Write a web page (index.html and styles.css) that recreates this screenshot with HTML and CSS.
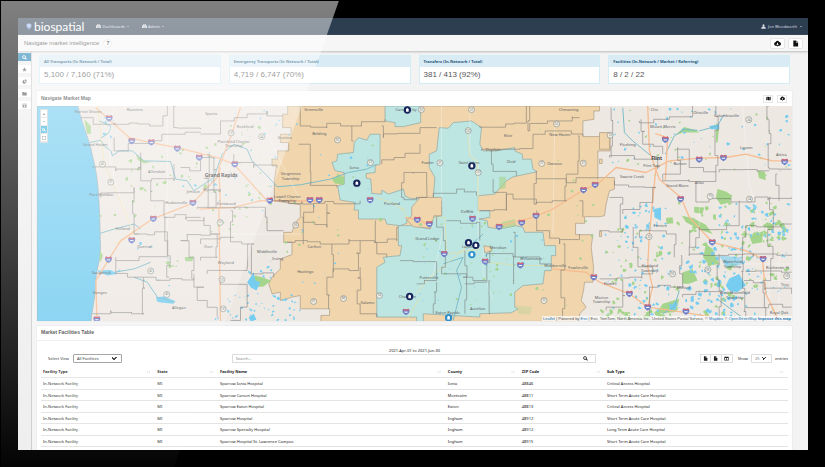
FILE: index.html
```html
<!DOCTYPE html>
<html lang="en">
<head>
<meta charset="utf-8">
<title>Navigate market intelligence</title>
<link rel="stylesheet" href="styles.css">
</head>
<body>
<svg class="defs" aria-hidden="true">
  <symbol id="i-cloud" viewBox="0 0 16 16"><path d="M4 13a4 4 0 0 1-.6-7.900A4.600 4.600 0 0 1 12 4.500 4.300 4.300 0 0 1 12.500 13H10l-2 2-2-2zM7 6v3H5l3 3 3-3H9V6z" fill-rule="evenodd"/></symbol>
  <symbol id="i-file" viewBox="0 0 16 16"><path d="M3 1h6v5h5v9H3zM10 1l4 4h-4z"/></symbol>
  <symbol id="i-map" viewBox="0 0 16 16"><path d="M1 3l4-1v11l-4 1zM6 2l4 1v11l-4-1zM11 3l4-1v11l-4 1z"/></symbol>
  <symbol id="i-search" viewBox="0 0 16 16"><path d="M6.500 1a5.500 5.500 0 1 0 3 10l4 4 2-2-4-4A5.500 5.500 0 0 0 6.500 1zm0 2.500a3 3 0 1 1 0 6 3 3 0 0 1 0-6z" fill-rule="evenodd"/></symbol>
  <symbol id="i-dash" viewBox="0 0 16 16"><path d="M1 13a8 8 0 1 1 14 0zM7 4v2h2V4zM3 8v2h2V8zm8 0v2h2V8zM7 12h2l1-5z" fill-rule="evenodd"/></symbol>
  <symbol id="i-star" viewBox="0 0 16 16"><path d="M8 1l2 5 5 .4-4 3.400 1.300 5.200L8 12l-4.300 3L5 9.800 1 6.400 6 6z"/></symbol>
  <symbol id="i-pie" viewBox="0 0 16 16"><path d="M7 3v6l5 4A6 6 0 1 1 7 3zM9 1a6 6 0 0 1 6 6H9zM10 8.500h5a6 6 0 0 1-2 4z"/></symbol>
  <symbol id="i-folder" viewBox="0 0 16 16"><path d="M1 3h5l2 2h7v9H1z"/></symbol>
  <symbol id="i-save" viewBox="0 0 16 16"><path d="M2 2h12v12H2zM4 4v3h8V4zM6 9v4h4V9z" fill-rule="evenodd"/></symbol>
  <symbol id="i-user" viewBox="0 0 16 16"><path d="M8 1a3.500 4 0 0 1 2 7l5 3v4H1v-4l5-3a3.500 4 0 0 1 2-7z"/></symbol>
  <symbol id="i-table" viewBox="0 0 16 16"><path d="M1 2h14v12H1zM3 6v6h4V6zm6 0v6h4V6z" fill-rule="evenodd"/></symbol>
</svg>

<div class="screen">
  <header class="navbar">
    <a class="brand" href="#"><svg class="brand-mark" viewBox="0 0 16 18"><path d="M8 0a7 7 0 0 1 7 7c0 5-5 7-7 11C6 14 1 12 1 7a7 7 0 0 1 7-7z" fill="#6f93dd"/><path d="M3 5l4-2 2 3 4-1M4 9l4-2 4 3M8 3v8" stroke="#dce8fb" stroke-width="1.500" fill="none"/></svg>biospatial</a>
    <nav class="nav-links">
      <a href="#"><svg><use href="#i-dash"/></svg>Dashboards<i class="caret"></i></a>
      <a href="#"><svg><use href="#i-dash"/></svg>Admin<i class="caret"></i></a>
    </nav>
    <a class="user" href="#"><svg><use href="#i-user"/></svg>Jon Woodworth<i class="caret"></i></a>
  </header>

  <div class="titlebar">
    <h1>Navigate market intelligence</h1>
    <button class="help" type="button">?</button>
    <div class="title-actions">
      <button type="button" aria-label="Download"><svg><use href="#i-cloud"/></svg></button>
      <button type="button" aria-label="Document"><svg><use href="#i-file"/></svg></button>
    </div>
  </div>

  <div class="workspace">
    <aside class="rail">
      <button class="active" type="button" aria-label="Search"><svg><use href="#i-search"/></svg></button>
      <button type="button" aria-label="Favorites"><svg><use href="#i-star"/></svg></button>
      <button type="button" aria-label="Charts"><svg><use href="#i-pie"/></svg></button>
      <button type="button" aria-label="Folders"><svg><use href="#i-folder"/></svg></button>
      <button type="button" aria-label="Save"><svg><use href="#i-save"/></svg></button>
    </aside>

    <main class="content">
      <section class="stats">
        <article class="stat"><h2>All Transports (In Network / Total)</h2><p>5,100 / 7,160 (71%)</p></article>
        <article class="stat"><h2>Emergency Transports (In Network / Total)</h2><p>4,719 / 6,747 (70%)</p></article>
        <article class="stat"><h2>Transfers (In-Network / Total)</h2><p>381 / 413 (92%)</p></article>
        <article class="stat"><h2>Facilities (In-Network / Market / Referring)</h2><p>8 / 2 / 22</p></article>
      </section>

      <section class="panel map-panel">
        <div class="panel-head">
          <h2>Navigate Market Map</h2>
          <div class="map-actions">
            <button type="button" aria-label="Map layers"><svg><use href="#i-map"/></svg></button>
            <button type="button" aria-label="Download map"><svg><use href="#i-cloud"/></svg></button>
          </div>
        </div>
        <div class="map">
          <svg class="map-canvas" viewBox="108 15 2271 648">
            <rect x="108" y="15" width="2271" height="648" fill="#eee8e3"/>
            <path d="M108 15H231C246 80 265 110 276 170C296 240 296 330 299 440C299 485 287 500 285 540C284 590 275 620 270 663H108Z" fill="#76cdf0" stroke="#9aa9ad" stroke-width="2"/>

            <path class="orange" d="M862 15V40H847V80H872V100H840V125H865V150H832V175H815V195H828L822 240V300L900 312V350L885 365L875 395H850V425H875V462L840 475V505L815 530L805 550L815 580L840 575V600L875 590L900 585V625H988V645H962V663H1740V640L1760 620L1745 600L1752 570L1755 545H1780L1782 500L1775 440L1780 402H1728V368H1755V348H1800L1815 345L1820 310L1830 270L1845 265V230H1795V150H1832V97H1805V107H1750V60L1783 55V30H1800V15Z"/>
            <path class="orange" d="M1800 95H1830V145H1800ZM1800 175H1808V188H1800ZM1800 392H1806V408H1800Z"/>
            <g class="teal">
              <path d="M1155 15H1262V65L1210 77H1185V65L1155 60Z"/>
              <path d="M995 185L1010 180L1012 160L1060 155L1062 125L1075 110L1100 118L1110 100H1140V190L1125 195V215L1098 218V232L1112 235L1115 278L1145 280V268L1165 280L1210 265L1215 285L1230 293H1260V320L1245 330V350L1220 352V368L1200 375L1160 370L1155 355H1075V328H1062L1065 305L1020 298L1012 255L1032 250V215L1005 210Z"/>
              <path d="M1318 80L1345 82L1360 65L1415 60L1445 80L1440 130L1450 150H1490L1545 140V150L1568 160V175H1595L1600 205L1612 213L1540 228L1520 240L1500 262L1485 280L1435 285V330H1470V350L1437 355L1462 360L1465 380L1500 385L1550 375L1570 380L1575 395H1630L1635 435H1668V465H1655V510H1635L1630 550L1570 555L1545 575V620L1555 625L1535 637L1440 640V650L1270 640V663H1250V650H1130V500L1155 485L1150 470L1200 465L1205 435H1195V375H1240L1290 385L1300 350L1325 345V320H1300V290L1305 230L1288 200V160L1310 150Z"/>
            </g>
            <path class="orange" d="M1235 320L1260 290H1325V345H1302L1292 383L1240 378L1222 360L1235 345ZM1452 435L1475 440V452L1455 456Z"/>

            <g class="park">
              <path d="M745 540L765 525L785 530L812 540L790 558L760 560Z"/><path d="M995 235L1012 225L1032 228V252L1005 248Z"/>
              <path d="M1498 228H1518V262L1498 266Z" opacity=".6"/><path d="M1507 365L1545 355L1548 375L1507 382Z" opacity=".6"/>
              <path d="M1550 615L1598 620L1590 643L1555 640Z" opacity=".3"/>
              <path d="M250 55L270 75V100L258 98Z"/><path d="M405 160L430 180L455 182L430 188L412 178Z"/><path d="M552 470L580 468L575 482H555Z"/><path d="M298 450L306 465L300 485L296 475Z"/>
              <path d="M2150 65L2160 80L2155 125H2150Z"/><path d="M2025 105L2055 78L2090 88L2100 95L2050 95Z"/><path d="M2155 265L2180 272L2200 285L2190 305L2165 312L2150 290Z"/>
              <path d="M2275 210L2298 213L2300 238L2280 232Z"/><path d="M2048 345L2080 352L2120 372L2140 400L2105 388L2060 365Z"/><path d="M2120 430L2140 445L2160 490L2130 495L2112 470Z"/>
              <path d="M2050 515L2080 505L2095 540L2070 550H2050Z"/><path d="M1990 610L2040 595L2030 635L1970 640Z"/><path d="M2085 318L2115 320L2110 340L2085 335Z"/><path d="M2250 405L2290 400V425L2260 430Z"/><path d="M2000 352L2020 350L2022 368L2002 370Z"/>
            </g>
            <g id="parks" class="park"></g>
            <g class="water">
              <path d="M740 545L760 515L765 540L780 545L768 570L752 562Z"/><path d="M465 590L490 588L525 602L518 610L480 606L470 604Z"/><path d="M745 650L760 640L768 658L750 662Z"/>
              <path d="M2190 535L2220 520L2240 555L2215 575L2190 570L2180 555Z"/><path d="M2160 465L2220 470L2235 490L2180 500Z" opacity=".6"/><path d="M1965 325L1985 320V360L1965 350Z"/>
              <path d="M2010 620L2030 600L2035 615L2015 632Z"/><path d="M2130 75L2160 70V85L2135 85Z"/><path d="M285 510L330 508L350 520L320 525Z"/>
            </g>
            <g id="lakes" class="water"></g>
            <g class="river">
              <path d="M266 125L300 118L310 135L330 150L335 165L355 150H395L430 180L510 182L525 235L560 240L580 270L640 230L665 160L700 130L740 145L755 180L800 225L830 258L900 252L990 235L1045 215L1100 205L1130 190"/>
              <path d="M298 398L340 385L400 370L420 385"/><path d="M295 60L330 75L325 95L300 112"/>
              <path d="M400 530L440 545L470 590L520 605M340 515L400 505L450 485"/>
              <path d="M2235 655L2160 600M1998 160L2025 105L2055 85L2095 88M1870 20L1875 95L1900 120L1955 165M2100 90L2155 75L2175 40"/>
              <path d="M1360 660L1385 560L1370 510L1390 470L1330 490M1400 445L1450 400"/><path d="M1990 640L2025 620L2040 570" />
            </g>
            <g class="minor">
              <path d="M340 15C300 150 350 280 400 400M500 15V400M760 20L900 300M1410 15V160L1435 185V420M1325 15V300M1665 80L1660 400M2230 15L2250 250L2300 420M1990 20V240M2100 250V400M620 400H900M1330 390L1300 520L1260 560M1480 600L1450 520V440M1960 540V660M2240 490H2378M2240 515H2378M2240 540H2378M2310 470V660M2340 470V660"/>
            </g>
            <g class="yellow">
              <path d="M290 15L310 190L375 340L400 400L340 430M1200 320L1230 360L1335 350L1340 460M1130 292L1160 300L1220 330M1340 460L1440 445M1402 90L1410 165L1432 180L1437 340M1250 580L1280 540L1400 440M1220 660L1260 590M1460 485L1560 495L1650 495"/>
            </g>
            <g class="highway">
              <path d="M285 20L330 60L385 110L450 125L530 140L650 170L700 190L800 300"/><path d="M288 655L285 540L325 475L360 420L455 355L575 308L650 230L660 200"/>
              <path d="M655 320L660 663M660 320L655 200L690 110L720 20"/><path d="M596 325L700 320L780 300H960"/><path d="M1215 350L1260 360L1290 375"/>
              <path d="M1480 380L1600 350L1660 325L1740 275L1800 245L1850 200L1940 215L2010 180L2100 172L2180 170L2240 160L2320 180H2378"/>
              <path d="M1655 505L1760 515L1800 545L1890 580L1945 620L2050 635L2140 650"/><path d="M1945 15L1950 150L1980 235L2045 290L2070 350L2140 425L2240 450L2290 475L2300 580L2340 663"/>
              <path d="M1970 200L1960 300L1950 400L1945 500L1960 560L1945 620"/><path d="M1968 98L2005 110L1998 240"/>
            </g>
            <g id="borders" class="borders"></g>
            <g id="shields"></g>
            <g id="rings"></g>
            <g id="labels" class="labels"></g>
            <g id="pins"></g>
          </svg>
          <div class="map-tools">
            <button type="button">+</button>
            <button type="button">−</button>
            <button class="active" type="button" aria-label="Zoom to area"><svg><use href="#i-search"/></svg></button>
            <button type="button" aria-label="Full screen"><svg viewBox="0 0 16 16"><path d="M2 6V2h4M10 2h4v4M14 10v4h-4M6 14H2v-4" fill="none" stroke="currentColor" stroke-width="2"/></svg></button>
          </div>
          <p class="attribution"><a href="#">Leaflet</a> | Powered by <a href="#">Esri</a> | Esri, TomTom, North America Inc., United States Postal Service, © <a href="#">Mapbox</a> © <a href="#">OpenStreetMap</a> <a href="#"><b>Improve this map</b></a></p>
        </div>
      </section>

      <section class="panel table-panel">
        <h2 class="table-title">Market Facilities Table</h2>
        <p class="period">2021-Apr-01 to 2021-Jun-30</p>
        <div class="controls">
          <div class="view">
            <label for="view">Select View</label>
            <select id="view"><option>All Facilities</option></select>
          </div>
          <div class="search">
            <input type="text" aria-label="Search" placeholder="Search...">
            <button type="button" aria-label="Search"><svg><use href="#i-search"/></svg></button>
          </div>
          <div class="paging">
            <div class="exports">
              <button type="button" aria-label="Export CSV"><svg><use href="#i-file"/></svg></button>
              <button type="button" aria-label="Export file"><svg><use href="#i-file"/></svg></button>
              <button type="button" aria-label="Columns"><svg><use href="#i-table"/></svg></button>
            </div>
            <label for="count">Show</label>
            <select id="count"><option>25</option></select>
            <span>entries</span>
          </div>
        </div>
        <table>
          <colgroup><col class="c-type"><col class="c-state"><col class="c-name"><col class="c-county"><col class="c-zip"><col></colgroup>
          <thead><tr><th>Facility Type<i>↓↑</i></th><th>State<i>↓↑</i></th><th>Facility Name<i>↓↑</i></th><th>County<i>↓↑</i></th><th>ZIP Code<i>↓↑</i></th><th>Sub Type<i>↓↑</i></th></tr></thead>
          <tbody>
            <tr><td>In-Network Facility</td><td>MI</td><td>Sparrow Ionia Hospital</td><td>Ionia</td><td>48846</td><td>Critical Access Hospital</td></tr>
            <tr><td>In-Network Facility</td><td>MI</td><td>Sparrow Carson Hospital</td><td>Montcalm</td><td>48811</td><td>Short Term Acute Care Hospital</td></tr>
            <tr><td>In-Network Facility</td><td>MI</td><td>Sparrow Eaton Hospital</td><td>Eaton</td><td>48813</td><td>Critical Access Hospital</td></tr>
            <tr><td>In-Network Facility</td><td>MI</td><td>Sparrow Hospital</td><td>Ingham</td><td>48912</td><td>Short Term Acute Care Hospital</td></tr>
            <tr><td>In-Network Facility</td><td>MI</td><td>Sparrow Specialty Hospital</td><td>Ingham</td><td>48912</td><td>Long Term Acute Care Hospital</td></tr>
            <tr><td>In-Network Facility</td><td>MI</td><td>Sparrow Hospital St. Lawrence Campus</td><td>Ingham</td><td>48915</td><td>Short Term Acute Care Hospital</td></tr>
            <tr><td>In-Network Facility</td><td>MI</td><td>Sparrow Specialty Hospital</td><td>Ingham</td><td>48917</td><td>Long Term Acute Care Hospital</td></tr>
          </tbody>
        </table>
      </section>
    </main>
  </div>
</div>
<div class="glare"></div>
<script src="map.js"></script>
</body>
</html>
```
FILE: styles.css
```css
* { box-sizing: border-box; }
body {
  margin: 0;
  min-height: 100vh;
  padding: 18px 17px 17px 18px;
  background: #000;
  color: #222;
  font: 4px/7px "Noto Sans", "Liberation Sans", sans-serif;
  overflow: hidden;
}
h1, h2, p { margin: 0; font-weight: normal; }
a { color: inherit; text-decoration: none; }
button, input, select { font: inherit; color: inherit; margin: 0; padding: 0; }
button { display: flex; align-items: center; justify-content: center; border: 0; background: #fff; }
svg { display: block; width: 5px; height: 5px; fill: currentColor; }
.defs { position: absolute; width: 0; height: 0; }

.screen {
  display: flex;
  flex-direction: column;
  height: calc(100vh - 35px);
  overflow: hidden;
  background: #f3f3f4;
}

.navbar {
  display: flex;
  flex: none;
  align-items: center;
  height: 17px;
  padding: 0 6px 0 8px;
  background: #2d3e50;
  color: #d5dae0;
}
.brand { display: flex; align-items: center; gap: 2px; color: #fff; font: 12px/16px Lato, sans-serif; }
.brand-mark { width: 6px; height: 7px; }
.nav-links { display: flex; gap: 13px; margin-left: 12px; }
.nav-links a, .user { display: flex; align-items: center; gap: 1px; }
.user { margin-left: auto; gap: 2px; }
.caret { margin-left: 1px; border: 1px solid transparent; border-top-color: currentColor; border-bottom: 0; }

.titlebar {
  display: flex;
  flex: none;
  position: relative;
  align-items: center;
  height: 16px;
  padding: 0 5px 0 6px;
  background: #f6f6f6;
  box-shadow: 0 1px 2px #bbb;
}
.titlebar h1 { color: #444; font-family: "Liberation Sans", sans-serif; font-size: 6px; }
.help { width: 9px; height: 9px; margin-left: 4px; border: 1px solid #e2e2e2; border-radius: 50%; font-weight: bold; font-size: 6px; }
.title-actions { display: flex; gap: 3px; margin-left: auto; color: #111; }
.title-actions button { width: 15px; height: 11px; border: 1px solid #e6e6e6; border-radius: 2px; }
.title-actions svg { width: 7px; height: 7px; }

.workspace { display: flex; flex: 1; min-height: 0; }
.rail { flex: none; width: 14px; padding-top: 2px; border-right: 1px solid #ccc; background: #eee; }
.rail button { width: 13px; height: 8px; margin-bottom: 4px; color: #555; }
.rail .active { background: #1b7fb0; color: #fff; }

.content { flex: 1; min-width: 0; padding: 4px 15px 0 4px; overflow: hidden; }
.stats { display: grid; grid-template-columns: repeat(4, 1fr); gap: 8px; padding: 0 3px; margin-bottom: 6px; }
.stat { border: 1px solid #d3edf5; background: #fff; }
.stat h2 { height: 11px; padding: 0 4px; background: #d9ebf5; color: #24587a; font-weight: bold; font-size: 4px; line-height: 11px; white-space: nowrap; }
.stat p { padding: 0 4px; color: #555; font-family: "Liberation Sans", sans-serif; font-size: 8px; line-height: 16px; }

.panel { border: 1px solid #ededed; background: #fff; }
.panel-head { display: flex; align-items: center; justify-content: space-between; height: 15px; padding: 0 5px 0 4px; }
.panel-head h2, .table-title { color: #444; font-family: "Liberation Sans", sans-serif; font-weight: bold; font-size: 5px; }
.map-actions { display: flex; gap: 4px; color: #111; }
.map-actions button { width: 10px; height: 8px; border: 1px solid #e6e6e6; }

.map { position: relative; }
.map-canvas { width: 100%; height: auto; }
.map-tools { position: absolute; top: 3px; left: 3px; width: 8px; border: 1px solid #c4d3d9; background: #fff; }
.map-tools button { width: 100%; height: 8px; border-bottom: 1px solid #ddd; font-weight: bold; }
.map-tools .active { background: #3db6dd; color: #fff; }
.map-tools svg { width: 4px; height: 4px; }
.attribution { position: absolute; right: 0; bottom: 0; padding: 0 1px; background: #ffffffb0; color: #555; font-family: "Liberation Sans", sans-serif; line-height: 5px; white-space: nowrap; }
.attribution a { color: #1676b5; }

.orange { fill: #f0d5ad; stroke: #a99a80; stroke-width: 2; }
.teal { fill: #bde5e1; stroke: #8ba6a3; stroke-width: 2; }
.park { fill: #a5d48c; }
.water { fill: #76cdf0; }
.river { fill: none; stroke: #7dbcc9; stroke-width: 3; stroke-linejoin: round; }
.minor { fill: none; stroke: #fff; stroke-width: 2; opacity: .5; }
.yellow { fill: none; stroke: #f4df92; stroke-width: 2; opacity: .8; }
.highway { fill: none; stroke: #f7bd92; stroke-width: 4; stroke-linejoin: round; }
.borders { fill: none; stroke: #666; stroke-width: 2; opacity: .7; }
.labels { fill: #5c6264; font-size: 12px; text-anchor: middle; }
.labels .city { font-size: 15px; font-weight: bold; fill: #444; }

.table-panel { margin-top: 3px; padding: 0 4px 8px; }
.table-title { margin: 0 -4px; padding: 3px 4px 4px; border-bottom: 1px solid #eee; }
.period { margin-top: 6px; text-align: center; }
.controls { display: grid; grid-template-columns: 25% 50% 25%; align-items: center; height: 9px; }
.view { display: flex; align-items: center; gap: 4px; padding-left: 7px; }
select {
  height: 9px;
  padding: 0 3px;
  border: 1px solid #999;
  border-radius: 1px;
  appearance: none;
  background: #fff conic-gradient(from -45deg at 50% 100%, #333 90deg, transparent 0) no-repeat right 4px center / 6px 3px;
}
select { background-image: linear-gradient(45deg, transparent 50%, #333 50% 80%, transparent 80%), linear-gradient(-45deg, transparent 50%, #333 50% 80%, transparent 80%); background-position: right 7px center, right 4px center; background-size: 3px 3px; transform: none; }
.view select { width: 49px; }
.search { display: flex; height: 9px; margin: 0 5px 0 4px; border: 1px solid #ddd; }
.search input { flex: 1; min-width: 0; padding: 0 3px; border: 0; outline: 0; }
.search input::placeholder { color: #888; opacity: 1; }
.search button { width: 20px; color: #222; }
.paging { display: flex; align-items: center; justify-content: flex-end; gap: 3px; }
.exports { display: flex; margin-right: 2px; }
.exports button { width: 11px; height: 9px; border: 1px solid #e0e0e0; }
.exports button + button { border-left: 0; }
.paging select { width: 21px; border-color: #ddd; color: #777; }

table { width: 100%; margin-top: 3px; border-collapse: separate; border-spacing: 0; table-layout: fixed; }
.c-type { width: 15.3%; }
.c-state { width: 8.4%; }
.c-name { width: 30.5%; }
.c-county { width: 9.9%; }
.c-zip { width: 11.4%; }
th, td { height: 12px; padding: 0 2px; border-bottom: 1px solid #e3e3e3; text-align: left; line-height: 7px; white-space: nowrap; }
tbody tr:nth-child(even) td { height: 11px; }
th i { float: right; margin-right: 3px; color: #999; font-style: normal; font-weight: normal; }

.glare {
  position: absolute;
  inset: 1px 0 0 1px;
  background: linear-gradient(#ffffff80, #ffffff04);
  clip-path: polygon(0 0, 41% 0, 21% 100%, 0 100%);
  pointer-events: none;
}
```
FILE: map.js
```js
const NS = 'http://www.w3.org/2000/svg';
const byId = (id) => document.getElementById(id);
function add(parent, tag, attrs, text) {
  const el = document.createElementNS(NS, tag);
  for (const key in attrs) el.setAttribute(key, attrs[key]);
  if (text) el.textContent = text;
  parent.appendChild(el);
  return el;
}

// Seeded generator keeps the terrain identical on every load.
let seed = 7;
const rnd = () => (seed = (seed * 16807) % 2147483647) / 2147483647;

// Each cluster: x, y, width, height, number of patches, patch size.
function scatter(id, clusters) {
  for (const [x, y, w, h, n, size] of clusters) {
    for (let i = 0; i < n; i++) {
      const cx = x + rnd() * w, cy = y + rnd() * h;
      const scale = size * (0.5 + rnd() * 0.9);
      const pts = [];
      for (let k = 0; k < 6; k++) {
        const r = scale * (0.3 + rnd());
        pts.push(`${cx + r * Math.cos(k * 1.05)},${cy + r * Math.sin(k * 1.05)}`);
      }
      add(byId(id), 'polygon', { points: pts.join(' ') });
    }
  }
}
scatter('parks', [
  [300, 180, 180, 180, 14, 5], [480, 120, 150, 160, 12, 5], [600, 40, 220, 380, 40, 4], [480, 480, 60, 20, 5, 6],
  [850, 60, 300, 400, 14, 4], [1260, 360, 300, 260, 34, 4], [1600, 60, 200, 560, 16, 4], [1830, 20, 540, 220, 30, 4],
  [2000, 300, 370, 130, 34, 7], [1820, 380, 560, 270, 90, 6], [2250, 370, 120, 70, 14, 9], [1800, 630, 220, 30, 20, 8]
]);
scatter('lakes', [
  [310, 30, 30, 80, 6, 4], [350, 380, 180, 230, 8, 4], [540, 240, 120, 40, 8, 4], [620, 30, 220, 300, 24, 3],
  [740, 480, 80, 60, 8, 4], [640, 580, 260, 80, 45, 4], [860, 50, 260, 500, 22, 3], [1260, 360, 180, 260, 18, 3],
  [1450, 400, 200, 100, 10, 3], [1830, 20, 540, 180, 46, 4], [1870, 310, 130, 120, 40, 5], [2150, 300, 220, 120, 44, 5],
  [2060, 440, 200, 210, 85, 6], [1870, 440, 180, 210, 40, 5], [1810, 390, 60, 270, 10, 3], [2250, 440, 120, 200, 18, 4]
]);

// County outlines run between waypoints in small right-angled steps.
function stepped(points) {
  let [x, y] = points[0];
  let d = `M${x} ${y}`;
  for (const [tx, ty] of points.slice(1)) {
    const n = Math.max(1, Math.round(Math.hypot(tx - x, ty - y) / 38));
    const sx = x, sy = y;
    for (let i = 1; i <= n; i++) {
      const last = i === n;
      const nx = last ? tx : sx + (tx - sx) * i / n + (rnd() - 0.5) * 18;
      const ny = last ? ty : sy + (ty - sy) * i / n + (rnd() - 0.5) * 18;
      d += rnd() > 0.5 ? `H${nx}V${ny}` : `V${ny}H${nx}`;
    }
    x = tx; y = ty;
  }
  add(byId('borders'), 'path', { d });
}
[
  [[240, 50], [300, 70], [385, 70], [480, 75], [500, 15]], [[340, 110], [340, 150], [450, 125], [520, 100], [600, 95]],
  [[525, 15], [530, 80], [600, 85]], [[275, 200], [345, 210], [420, 185]], [[420, 155], [420, 240], [520, 240], [520, 190]],
  [[300, 290], [400, 260], [400, 390], [415, 400]], [[450, 240], [450, 300], [490, 320], [490, 350], [600, 350]],
  [[400, 400], [500, 400], [500, 440], [415, 480], [345, 480]], [[345, 470], [345, 520], [430, 530], [580, 535], [580, 470], [540, 420], [560, 400], [660, 400]],
  [[500, 350], [505, 530]], [[560, 360], [610, 350], [650, 400], [650, 470], [600, 480]], [[428, 530], [430, 640], [330, 630], [275, 640]],
  [[580, 520], [610, 560], [590, 600], [650, 650]], [[540, 200], [600, 210], [640, 170], [640, 320], [590, 325]],
  [[600, 100], [660, 95], [680, 60], [740, 50], [800, 30], [847, 45]], [[700, 160], [760, 200], [830, 200]], [[620, 160], [620, 320], [790, 320], [800, 390], [850, 390]],
  [[690, 330], [690, 410], [760, 430], [750, 520], [820, 530]], [[600, 430], [700, 410]], [[660, 540], [740, 560], [740, 620], [690, 660]], [[745, 430], [740, 500], [620, 520]],
  [[820, 300], [940, 310], [1080, 300]], [[900, 15], [900, 75], [1055, 75], [1155, 55]], [[895, 130], [930, 170], [930, 250], [1010, 260]], [[1055, 75], [1060, 120]],
  [[1145, 75], [1150, 110], [1260, 80], [1310, 80]], [[940, 310], [910, 365], [980, 380], [980, 310]], [[860, 425], [960, 430], [1080, 420], [1190, 420], [1195, 380]],
  [[905, 350], [910, 430]], [[995, 430], [995, 530], [980, 545], [985, 625]], [[1080, 420], [1075, 510], [1000, 515]], [[1080, 500], [1080, 640], [1130, 650]],
  [[1125, 360], [1130, 460], [1160, 470]], [[1212, 215], [1212, 290], [1280, 290], [1280, 215], [1212, 215]], [[1145, 190], [1215, 170], [1260, 130]],
  [[1300, 290], [1370, 265], [1430, 285]], [[1440, 75], [1580, 60], [1580, 15]], [[1445, 150], [1600, 140], [1600, 100], [1670, 90], [1750, 105]],
  [[1475, 150], [1480, 190], [1550, 225]], [[1590, 15], [1590, 90], [1680, 60], [1740, 50]], [[1735, 105], [1735, 180], [1700, 220], [1700, 300], [1610, 310], [1610, 210]],
  [[1520, 330], [1540, 280], [1610, 310]], [[1610, 330], [1610, 390], [1680, 430], [1740, 400]], [[1610, 235], [1700, 240], [1795, 235]], [[1480, 235], [1520, 320], [1440, 330]],
  [[1690, 430], [1690, 660]], [[1740, 300], [1750, 350]], [[1200, 480], [1310, 485], [1310, 540], [1250, 550]], [[1310, 350], [1330, 420], [1325, 500], [1400, 550], [1460, 545], [1470, 450]],
  [[1395, 450], [1390, 530], [1460, 540]], [[1340, 360], [1430, 365], [1440, 420]], [[1460, 470], [1540, 460], [1655, 490]], [[1540, 395], [1540, 550]], [[1310, 545], [1300, 640]],
  [[1470, 540], [1470, 640]], [[1395, 550], [1395, 640]], [[1830, 170], [1940, 175], [1975, 205]], [[1835, 20], [1835, 170]], [[1920, 60], [2010, 55], [2080, 35], [2080, 15]],
  [[1925, 55], [1930, 130], [1990, 160]], [[2035, 140], [2035, 220], [1990, 240], [2150, 235], [2150, 15]], [[2035, 140], [2070, 145], [2070, 200], [2150, 210]],
  [[2310, 15], [2310, 200], [2378, 205]], [[2160, 215], [2310, 210]], [[1800, 390], [1870, 385], [1870, 310], [1830, 290]], [[1845, 240], [1970, 260], [1960, 305], [1870, 340]],
  [[2090, 250], [2090, 300], [2378, 290]], [[2220, 300], [2220, 375], [2100, 380], [2070, 440]], [[2070, 390], [2070, 465], [2235, 460], [2378, 465]], [[2335, 220], [2340, 300]],
  [[2315, 290], [2315, 500], [2300, 540]], [[2240, 380], [2230, 450], [2240, 660]], [[1900, 380], [1900, 440], [1960, 520], [1890, 530], [1800, 535]],
  [[1870, 540], [1870, 620], [1820, 630]], [[2045, 465], [2050, 560], [1950, 560], [1960, 650]], [[2160, 460], [2160, 570], [2050, 590]], [[2160, 570], [2160, 660]],
  [[2240, 380], [2378, 370]], [[2240, 510], [2378, 515]], [[1920, 410], [1960, 390], [2030, 400], [2025, 470]], [[2235, 540], [2378, 580]], [[2300, 540], [2300, 660]], [[2240, 620], [2378, 620]]
].forEach(stepped);

// Interstate shields.
[
  [325, 52], [393, 120], [452, 124], [530, 143], [596, 170], [577, 306], [458, 354], [393, 419], [323, 477], [288, 657], [703, 190],
  [808, 299], [929, 298], [957, 298], [1110, 298], [1252, 357], [1288, 370], [1218, 634], [1418, 354], [1498, 378], [1566, 366], [1609, 345],
  [1752, 268], [1787, 252], [1333, 460], [1456, 483], [1562, 494], [1783, 530], [1998, 116], [2100, 176], [2173, 171], [2357, 183], [2044, 295], [2139, 425],
  [2292, 475], [1890, 580], [1945, 620], [2060, 633]
].forEach(([x, y]) => {
  const g = add(byId('shields'), 'g', { transform: `translate(${x} ${y})` });
  add(g, 'path', { d: 'M-10-6L-7-9L0-7L7-9L10-6C12 2 6 8 0 10C-6 8-12 2-10-6Z', fill: '#6f80c8' });
  add(g, 'path', { d: 'M-10-4L-7-9L0-7L7-9L10-4Z', fill: '#d9626f' });
  add(g, 'path', { d: 'M-5 1H5', stroke: '#fff', 'stroke-width': 3 });
});

// State route markers.
[
  [305, 190, 45], [330, 244, 31], [450, 511, 40], [498, 582, 40], [692, 96, 131], [784, 107, 44], [659, 365, 131], [886, 373, 50], [664, 537, 131], [668, 625, 131],
  [940, 603, 37], [1030, 594, 66], [1012, 117, 91], [1111, 185, 21], [1264, 26, 57], [1415, 26, 27], [1320, 186, 21], [1405, 89, 127], [1435, 215, 127], [1626, 188, 21], [1671, 69, 52],
  [1751, 187, 21], [1633, 600, 52], [1832, 103, 13], [2249, 56, 24], [2133, 287, 15], [2251, 295, 24], [1949, 408, 23], [2020, 520, 59], [2126, 507, 59], [2363, 526, 59], [1138, 585, 50]
].forEach(([x, y, n]) => {
  add(byId('rings'), 'circle', { cx: x, cy: y, r: 9, fill: '#f3f1ea', 'fill-opacity': 0.8, stroke: '#8b9290', 'stroke-width': 2 });
  add(byId('rings'), 'text', { x, y: y + 3, 'font-size': 8, 'text-anchor': 'middle', fill: '#666' }, String(n));
});

[
  [262, 36, 'Norton Shores'], [402, 29, 'Ravenna'], [632, 43, 'Sparta'], [283, 134, 'Grand Haven'], [468, 217, 'Allendale'], [302, 285, 'Port Sheldon'],
  [527, 311, 'Hudsonville'], [578, 276, 'Jenison'], [366, 387, 'Holland'], [432, 442, 'Overisel'], [302, 521, 'Saugatuck'], [297, 580, 'Ganges'], [535, 625, 'Allegan'],
  [624, 443, 'Dorr'], [634, 272, 'Wyoming'], [677, 312, 'Kentwood'], [734, 80, 'Rockford'], [700, 126, 'Plainfield Charter'], [700, 138, 'Township'], [676, 491, 'Wayland'],
  [800, 456, 'Middleville'], [832, 478, 'Irving'], [915, 518, 'Hastings'], [942, 443, 'Carlton'], [1102, 612, 'Kalamo'], [940, 29, 'Greenville'], [957, 102, 'Belding'], [853, 115, 'Grattan'],
  [871, 223, 'Vergennes'], [871, 237, 'Township'], [861, 291, 'Lowell Charter'], [861, 304, 'Township'], [1062, 204, 'Ionia'], [1176, 312, 'Portland'], [1218, 29, 'Carson City'],
  [1283, 189, 'Fowler'], [1408, 190, 'Saint Johns'], [1525, 109, 'Elsie'], [1534, 186, 'Ovid'], [1480, 149, 'Duplain'], [1681, 104, 'New Haven'], [1665, 193, 'Owosso'], [1707, 29, 'Chesaning'],
  [1402, 336, 'DeWitt'], [1282, 418, 'Grand Ledge'], [1408, 443, 'Lansing'], [1495, 446, 'Meridian'], [1594, 478, 'Williamston'], [1667, 498, 'Webberville'], [1736, 504, 'Fowlerville'],
  [1287, 534, 'Potterville'], [1222, 593, 'Charlotte'], [1433, 629, 'Aurelius'], [1343, 642, 'Eaton Rapids'], [1832, 554, 'Howell'], [1806, 596, 'Marion'], [1806, 609, 'Township'],
  [1965, 29, 'Clio'], [2104, 39, 'Otisville'], [2182, 48, 'Columbiaville'], [1990, 82, 'Mount Morris'], [1885, 134, 'Flushing'], [1957, 200, 'Flint Twp'], [2042, 192, 'Burton'],
  [2242, 145, 'Lapeer'], [2347, 164, 'Attica'], [1898, 231, 'Swartz Creek'], [2034, 260, 'Grand Blanc'], [2100, 249, 'Atlas'], [1983, 379, 'Fenton'], [1951, 500, 'Hartland'], [1951, 514, 'Township'],
  [2200, 487, 'Waterford'], [2200, 501, 'Township'], [2335, 506, 'Rochester H'], [2358, 556, 'Troy'], [2053, 565, 'Milford'], [2207, 582, 'West Bloomfield'], [2207, 595, 'Township'], [2340, 641, 'Royal Oak']
].forEach(([x, y, name]) => add(byId('labels'), 'text', { x, y }, name));
add(byId('labels'), 'text', { x: 662, y: 228, class: 'city' }, 'Grand Rapids');
add(byId('labels'), 'text', { x: 1972, y: 178, class: 'city' }, 'Flint');

// Hospital pins: dark for in-network, blue for market facilities.
[
  [1222, 27, 1], [1070, 247, 1], [1416, 195, 1], [1406, 426, 1], [1428, 434, 1], [1229, 588, 1], [1416, 462, 0], [1346, 652, 0]
].forEach(([x, y, inNetwork]) => {
  const g = add(byId('pins'), 'g', { transform: `translate(${x} ${y})` });
  add(g, 'circle', { r: 11, fill: inNetwork ? '#17245c' : '#2f8fc9' });
  add(g, 'path', { d: 'M-4 5V-3L0-6L4-3V5Z', fill: '#fff' });
});
```
